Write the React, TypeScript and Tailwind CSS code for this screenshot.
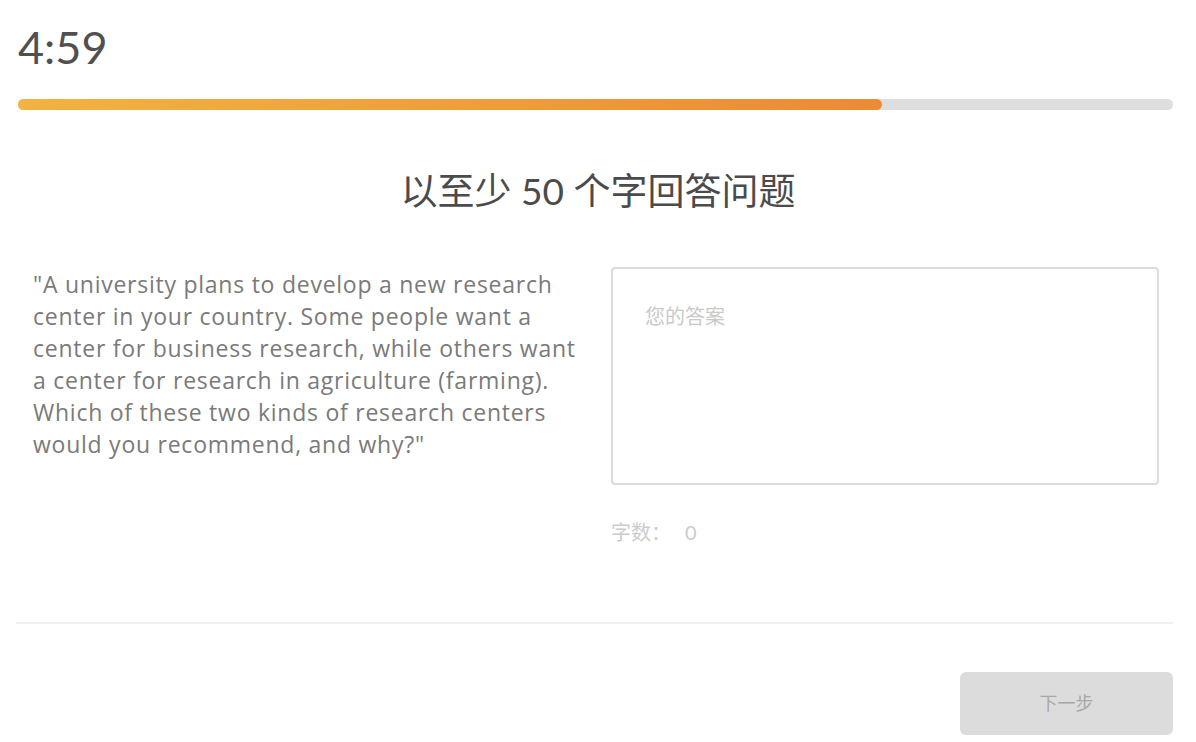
export default function App() {
  const progress = 74.8;
  const promptLines = [
    '"A university plans to develop a new research',
    "center in your country. Some people want a",
    "center for business research, while others want",
    "a center for research in agriculture (farming).",
    "Which of these two kinds of research centers",
    'would you recommend, and why?"',
  ];
  return (
    <div
      className="w-[1196px] h-[742px] bg-white overflow-hidden"
      style={{ fontFamily: 'Lato, "Noto Sans CJK SC", sans-serif' }}
    >
      {/* Timer */}
      <div className="pl-[18px] pt-[22px] h-[74px] text-[45px] leading-[50px] text-[#505050]">4:59</div>

      {/* Progress */}
      <div className="ml-[18px] mr-[23px] mt-[25px] h-[11px] rounded-full bg-[#dedede]">
        <div
          className="h-full rounded-full bg-gradient-to-r from-[#f1b342] to-[#ec8a35]"
          style={{ width: `${progress}%` }}
        />
      </div>

      {/* Title */}
      <h1 className="mt-[58px] text-center text-[37px] leading-[46px] text-[#4b4b4b]">以至少 50 个字回答问题</h1>

      {/* Body */}
      <div className="flex mt-[54px] pl-[33px]">
        <p
          className="w-[555px] text-[23px] leading-[32px] tracking-[0.75px] text-[#7a7a7a] whitespace-nowrap"
          style={{ fontFamily: '"Open Sans", sans-serif' }}
        >
          {promptLines.map((l) => (
            <span key={l} className="block">{l}</span>
          ))}
        </p>
        <div className="ml-[23px] w-[548px] -mt-px">
          <div className="h-[218px] rounded-[4px] border-2 border-[#dcdcdc] px-[32px] pt-[32px]">
            <span className="text-[20px] text-[#c9c9c9]">您的答案</span>
          </div>
          <div className="mt-[32px] text-[20px] text-[#cccccc]">
            字数：<span className="ml-[14px]">0</span>
          </div>
        </div>
      </div>

      {/* Divider */}
      <div className="ml-[16px] mr-[23px] mt-[75px] h-[2px] bg-[#f0f0f0]" />

      {/* Footer */}
      <div className="flex justify-end pr-[23px] mt-[48px]">
        <button className="w-[213px] h-[63px] rounded-[6px] bg-[#dcdcdc] text-[18px] text-[#a8a8a8]">下一步</button>
      </div>
    </div>
  );
}
